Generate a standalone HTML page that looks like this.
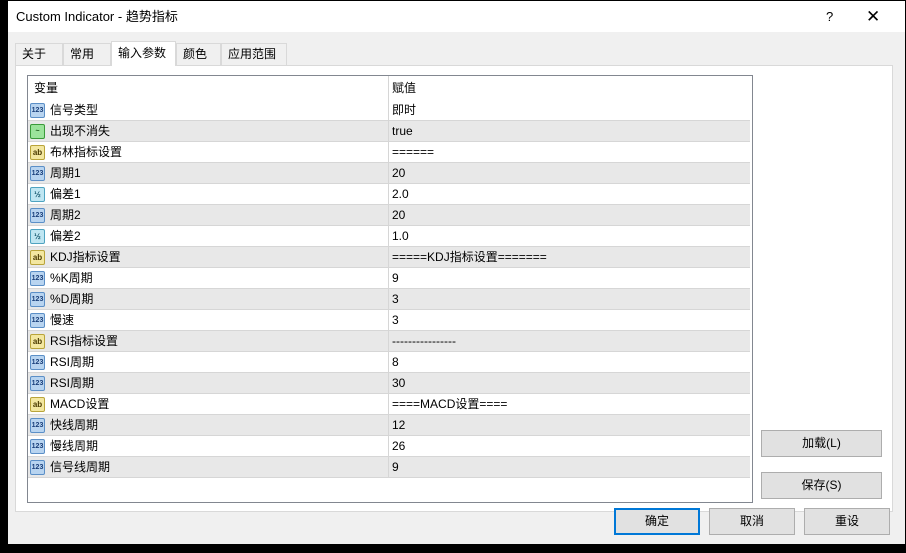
<!DOCTYPE html>
<html><head><meta charset="utf-8"><style>
*{box-sizing:border-box;margin:0;padding:0}
body{width:906px;height:553px;background:#000;position:relative;overflow:hidden;font-family:"Liberation Sans","Noto Sans CJK SC",sans-serif;font-size:12px;color:#000}
span,div{line-height:1}
.win{position:absolute;left:8px;top:1px;width:897px;height:543px;background:#f0f0f0}
.title{position:absolute;left:0;top:0;width:897px;height:31px;background:#fff;font-size:13px}
.title .t{position:absolute;left:8px;top:0;line-height:31px}
.title .q{position:absolute;left:818px;top:0;line-height:31px;font-size:13px}
.title .x{position:absolute;left:858px;top:0;line-height:31px;font-size:17px}
.tab{position:absolute;top:42px;height:22px;border:1px solid #d9d9d9;border-bottom:none;background:#f0f0f0;padding:0 6px;line-height:21px;font-size:12px}
.tab.act{top:40px;height:25px;line-height:23px;background:#fff;z-index:2}
.panel{position:absolute;left:7px;top:64px;width:878px;height:447px;background:#fff;border:1px solid #d9d9d9}
.tbl{position:absolute;left:19px;top:74px;width:726px;height:428px;border:1px solid #828790;background:#fff}
.row{position:absolute;left:0;width:722px;height:21px;border-bottom:1px solid #d6d6d6}
.row.g{background:#e8e8e8}
.row .n{position:absolute;left:22px;top:0;line-height:20px}
.row .v{position:absolute;left:364px;top:0;line-height:20px}
.row .d{position:absolute;left:360px;top:0;width:1px;height:21px;background:#d6d6d6}
.ic{position:absolute;left:2px;top:3px;width:15px;height:15px;border-radius:2px;font-size:7px;font-weight:bold;line-height:13px;text-align:center;font-family:"Liberation Sans",sans-serif}
.i1{background:#b8d4f0;border:1px solid #5b8fc7;color:#1a3f7a}
.i2{background:#f3e7a0;border:1px solid #b9a43a;color:#4a3a00;font-size:8px}
.i3{background:#bfe6f2;border:1px solid #4fa3c0;color:#11546b;font-size:8px}
.i4{background:#9be39b;border:1px solid #3a9a3a;color:#145214}
.btn{position:absolute;height:27px;border:1px solid #adadad;background:#e1e1e1;text-align:center;line-height:25px;font-size:12px}
</style></head><body>
<div class="win">
<div class="title"><span class="t">Custom Indicator - 趋势指标</span><span class="q">?</span><span class="x">✕</span></div>
<div class="tab" style="left:7px;width:48px">关于</div>
<div class="tab" style="left:55px;width:48px">常用</div>
<div class="tab act" style="left:103px;width:65px">输入参数</div>
<div class="tab" style="left:168px;width:45px">颜色</div>
<div class="tab" style="left:213px;width:66px">应用范围</div>
<div class="panel"></div>
<div class="tbl">
<div class="row" style="top:0;height:24px;border-bottom:none"><span class="n" style="left:6px;line-height:24px">变量</span><span class="v" style="line-height:24px">赋值</span><span class="d" style="height:24px"></span></div>
<div class="row" style="top:24px"><span class="ic i1">123</span><span class="n">信号类型</span><span class="d"></span><span class="v">即时</span></div>
<div class="row g" style="top:45px"><span class="ic i4">~</span><span class="n">出现不消失</span><span class="d"></span><span class="v">true</span></div>
<div class="row" style="top:66px"><span class="ic i2">ab</span><span class="n">布林指标设置</span><span class="d"></span><span class="v">======</span></div>
<div class="row g" style="top:87px"><span class="ic i1">123</span><span class="n">周期1</span><span class="d"></span><span class="v">20</span></div>
<div class="row" style="top:108px"><span class="ic i3">½</span><span class="n">偏差1</span><span class="d"></span><span class="v">2.0</span></div>
<div class="row g" style="top:129px"><span class="ic i1">123</span><span class="n">周期2</span><span class="d"></span><span class="v">20</span></div>
<div class="row" style="top:150px"><span class="ic i3">½</span><span class="n">偏差2</span><span class="d"></span><span class="v">1.0</span></div>
<div class="row g" style="top:171px"><span class="ic i2">ab</span><span class="n">KDJ指标设置</span><span class="d"></span><span class="v">=====KDJ指标设置=======</span></div>
<div class="row" style="top:192px"><span class="ic i1">123</span><span class="n">%K周期</span><span class="d"></span><span class="v">9</span></div>
<div class="row g" style="top:213px"><span class="ic i1">123</span><span class="n">%D周期</span><span class="d"></span><span class="v">3</span></div>
<div class="row" style="top:234px"><span class="ic i1">123</span><span class="n">慢速</span><span class="d"></span><span class="v">3</span></div>
<div class="row g" style="top:255px"><span class="ic i2">ab</span><span class="n">RSI指标设置</span><span class="d"></span><span class="v">----------------</span></div>
<div class="row" style="top:276px"><span class="ic i1">123</span><span class="n">RSI周期</span><span class="d"></span><span class="v">8</span></div>
<div class="row g" style="top:297px"><span class="ic i1">123</span><span class="n">RSI周期</span><span class="d"></span><span class="v">30</span></div>
<div class="row" style="top:318px"><span class="ic i2">ab</span><span class="n">MACD设置</span><span class="d"></span><span class="v">====MACD设置====</span></div>
<div class="row g" style="top:339px"><span class="ic i1">123</span><span class="n">快线周期</span><span class="d"></span><span class="v">12</span></div>
<div class="row" style="top:360px"><span class="ic i1">123</span><span class="n">慢线周期</span><span class="d"></span><span class="v">26</span></div>
<div class="row g" style="top:381px"><span class="ic i1">123</span><span class="n">信号线周期</span><span class="d"></span><span class="v">9</span></div>
</div>
<div class="btn" style="left:753px;top:429px;width:121px">加载(L)</div>
<div class="btn" style="left:753px;top:471px;width:121px">保存(S)</div>
<div class="btn" style="left:606px;top:507px;width:86px;border:2px solid #0078d7;line-height:23px">确定</div>
<div class="btn" style="left:701px;top:507px;width:86px">取消</div>
<div class="btn" style="left:796px;top:507px;width:86px">重设</div>
</div>
</body></html>
